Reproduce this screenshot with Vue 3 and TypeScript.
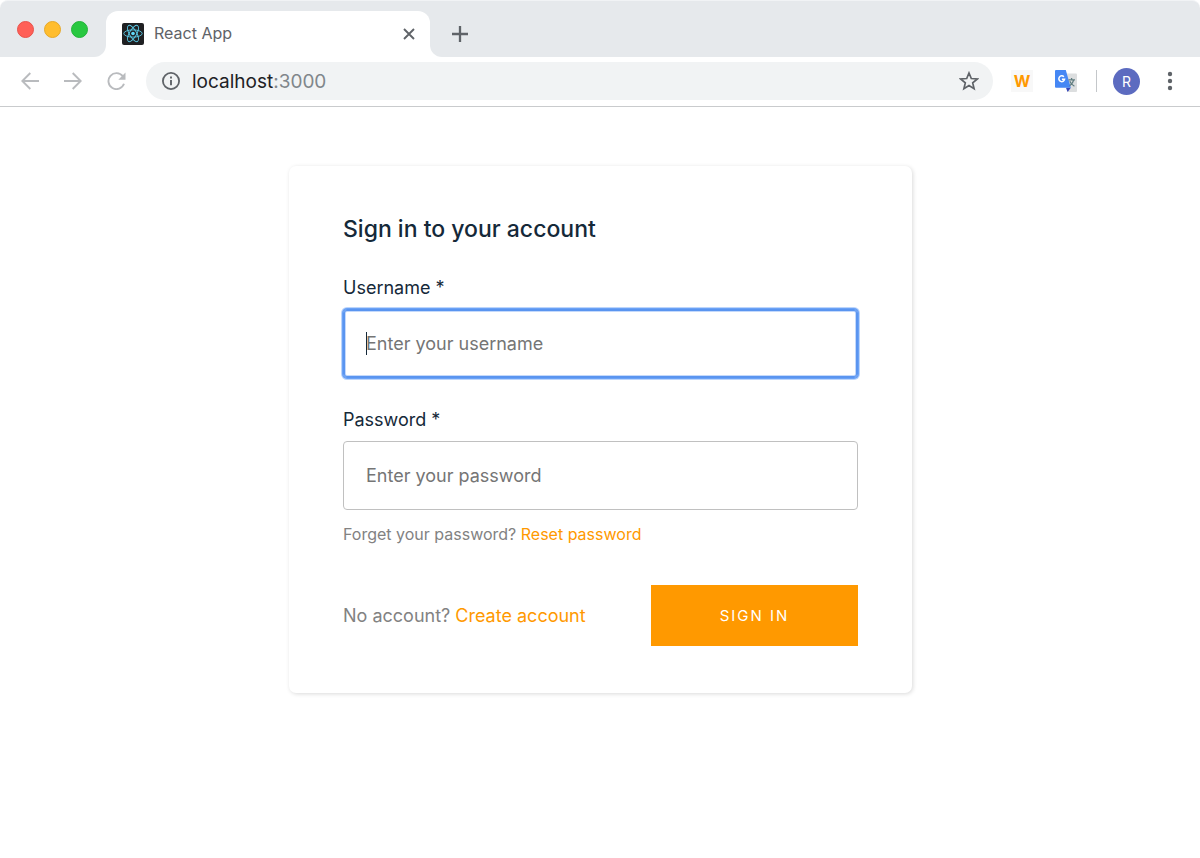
<script setup lang="ts">
import { ref } from 'vue'

const username = ref('')
const password = ref('')
const address = { host: 'localhost', port: ':3000' }
const lights = ['close', 'minimise', 'zoom']
</script>

<template>
  <div class="window">
    <header>
      <div class="tab-strip">
        <div class="lights">
          <button v-for="l in lights" :key="l" type="button" class="light" :class="l" :aria-label="l"></button>
        </div>
        <div class="tab-back">
          <div class="tab">
            <svg class="favicon" width="22" height="22" viewBox="0 0 22 22" aria-hidden="true">
              <rect width="22" height="22" rx="2" fill="#1f2022" />
              <g fill="none" stroke="#5ccbe8" stroke-width="0.9">
                <ellipse cx="11" cy="10.500" rx="9.2" ry="3.6" />
                <ellipse cx="11" cy="10.500" rx="9.2" ry="3.6" transform="rotate(60 11 10.500)" />
                <ellipse cx="11" cy="10.500" rx="9.2" ry="3.6" transform="rotate(120 11 10.500)" />
              </g>
              <circle cx="11" cy="10.500" r="1.8" fill="#61dafb" />
            </svg>
            <span class="tab-title">React App</span>
            <button type="button" class="icon-button small" aria-label="Close tab">
              <svg width="12" height="12" viewBox="0 0 12 12"><path d="M1 1l10 10M11 1L1 11" stroke="#5f6368" stroke-width="1.9" /></svg>
            </button>
          </div>
        </div>
        <div class="strip-rest">
          <button type="button" class="icon-button" aria-label="New tab">
            <svg width="16" height="16" viewBox="0 0 16 16"><path d="M8 0v16M0 8h16" stroke="#5f6368" stroke-width="2.3" /></svg>
          </button>
        </div>
      </div>

      <div class="toolbar">
        <nav class="history">
          <button type="button" class="icon-button" aria-label="Back">
            <svg width="18" height="18" viewBox="0 0 18 18"><path d="M18 9H1.5M9.3 1L1.3 9l8 8" fill="none" stroke="#b9bbbe" stroke-width="1.9" /></svg>
          </button>
          <button type="button" class="icon-button" aria-label="Forward">
            <svg width="18" height="18" viewBox="0 0 18 18"><path d="M0 9h16.500M8.700 1l8 8-8 8" fill="none" stroke="#b9bbbe" stroke-width="1.9" /></svg>
          </button>
          <button type="button" class="icon-button" aria-label="Reload">
            <svg width="20" height="18" viewBox="0 0 20 18">
              <path d="M15.800 4.200A8 8 0 1 0 17 11.800" fill="none" stroke="#b9bbbe" stroke-width="1.9" />
              <path d="M18.500 .5v7.200h-7.200z" fill="#b9bbbe" />
            </svg>
          </button>
        </nav>
        <div class="address">
          <svg width="18" height="18" viewBox="0 0 18 18" aria-hidden="true">
            <circle cx="9" cy="9" r="8.100" fill="none" stroke="#5f6368" stroke-width="1.800" />
            <path d="M9 8v5.200M9 4.600v2" stroke="#5f6368" stroke-width="1.900" />
          </svg>
          <span class="url">{{ address.host }}<span class="port">{{ address.port }}</span></span>
          <button type="button" class="icon-button" aria-label="Bookmark this page">
            <svg width="20" height="20" viewBox="0 0 20 20">
              <path d="M10 2l2.300 5.500 6 .5-4.600 3.900 1.400 5.800L10 14.600l-5.100 3.100 1.400-5.800L1.700 8l6-.5z" fill="none" stroke="#5f6368" stroke-width="1.700" />
            </svg>
          </button>
        </div>
        <div class="extensions">
          <button type="button" class="ext-w" aria-label="W extension">W</button>
          <button type="button" class="icon-button" aria-label="Translate">
            <svg width="22" height="22" viewBox="0 0 22 22">
              <path d="M8 3.600h13a1 1 0 0 1 1 1V21a1 1 0 0 1-1 1h-8z" fill="#dcdedf" />
              <path d="M11 17.800h4.800L12.600 22z" fill="#3444b8" />
              <path d="M1 0h9.800l5 17.800H1a1 1 0 0 1-1-1V1a1 1 0 0 1 1-1z" fill="#4587f4" />
              <path d="M8.900 6.800A2.900 2.900 0 1 0 9.600 9.200H6.900" fill="none" stroke="#fff" stroke-width="1.500" />
              <path d="M13.500 9.800H20M16.600 8v1.800M18.700 9.800c-.5 2.500-2 4.500-4 6M14.800 11.300c.8 2 2.500 3.700 4.600 4.900" fill="none" stroke="#607d80" stroke-width="1.300" />
            </svg>
          </button>
          <span class="divider"></span>
          <button type="button" class="avatar" aria-label="Profile R">R</button>
          <button type="button" class="icon-button menu" aria-label="Menu">
            <svg width="6" height="20" viewBox="0 0 6 20" fill="#5f6368"><circle cx="3" cy="3" r="2.200" /><circle cx="3" cy="10" r="2.200" /><circle cx="3" cy="17" r="2.200" /></svg>
          </button>
        </div>
      </div>
    </header>

    <main>
      <form class="card" @submit.prevent>
        <h1>Sign in to your account</h1>
        <div class="field">
          <label for="username">Username *</label>
          <div class="control">
            <input id="username" v-model="username" class="active" type="text" placeholder="Enter your username" />
            <span v-if="!username" class="caret"></span>
          </div>
        </div>
        <div class="field">
          <label for="password">Password *</label>
          <div class="control">
            <input id="password" v-model="password" type="password" placeholder="Enter your password" />
          </div>
          <p class="hint">Forget your password? <a href="#reset">Reset password</a></p>
        </div>
        <div class="actions">
          <span>No account? <a href="#create">Create account</a></span>
          <button type="submit" class="submit">SIGN IN</button>
        </div>
      </form>
    </main>
  </div>
</template>

<style>
body {
  margin: 0;
  background: #fff;
}
</style>

<style scoped>
* {
  box-sizing: border-box;
}
.window {
  font-family: Inter, "Liberation Sans", sans-serif;
  min-height: 100vh;
  background: #fff;
}
button {
  font-family: inherit;
  border: 0;
  padding: 0;
  background: none;
  cursor: pointer;
}
svg {
  display: block;
  flex: none;
}
.tab-strip {
  display: flex;
  height: 57px;
}
.lights,
.strip-rest {
  display: flex;
  align-items: center;
  background: #e6e9ec;
  border-top: 1px solid #f1f3f5;
}
.lights {
  width: 106px;
  padding: 0 0 0 17px;
  gap: 10px;
  border-radius: 8px 0 12px 0;
}
.light {
  width: 17px;
  height: 17px;
  border-radius: 50%;
}
.close {
  background: #ff5f57;
  border: 1px solid #e8524b;
}
.minimise {
  background: #ffbd2e;
  border: 1px solid #e6a827;
}
.zoom {
  background: #28c840;
  border: 1px solid #24b33a;
}
.tab-back {
  flex: 0 1 324px;
  padding-top: 10px;
  background: linear-gradient(#e6e9ec 50%, #fff 50%);
  border-top: 1px solid #f1f3f5;
}
.tab {
  display: flex;
  align-items: center;
  height: 46px;
  padding: 0 15px 0 16px;
  background: #fff;
  border-radius: 12px 12px 0 0;
}
.tab-title {
  flex: 1;
  margin-left: 10px;
  padding-bottom: 2px;
  font-size: 16px;
  line-height: 20px;
  color: #5f6368;
}
.strip-rest {
  flex: 1;
  padding: 9px 0 0 22px;
  border-radius: 0 8px 0 12px;
}
.toolbar {
  display: flex;
  align-items: center;
  height: 50px;
  padding: 0 27px 1px 21px;
  border-bottom: 1px solid #c9cbcd;
}
.history {
  display: flex;
  align-items: center;
  gap: 25px;
  width: 125px;
}
.address {
  display: flex;
  align-items: center;
  flex: 1;
  height: 38px;
  padding: 0 14px 0 16px;
  border-radius: 19px;
  background: #f1f3f4;
}
.url {
  flex: 1;
  margin-left: 12px;
  padding-top: 2px;
  font-size: 19px;
  line-height: 24px;
  color: #202124;
}
.port {
  color: #80868b;
}
.extensions {
  display: flex;
  align-items: center;
  margin-left: 18px;
}
.ext-w {
  width: 22px;
  height: 22px;
  margin-right: 22px;
  background: #f8f8f8;
  color: #ff9900;
  font-size: 16px;
  line-height: 22px;
  font-weight: 700;
}
.divider {
  width: 1px;
  height: 22px;
  margin: 0 16px 0 19px;
  background: #c4c7ca;
}
.avatar {
  width: 27px;
  height: 27px;
  margin-right: 27px;
  border-radius: 50%;
  background: #5c6bc0;
  color: #fff;
  font-size: 14px;
  line-height: 27px;
}
main {
  padding: 59px 24px 24px 25px;
}
.card {
  max-width: 623px;
  margin: 0 auto;
  padding: 48px 54px 47px;
  border-radius: 7px;
  background: #fff;
  box-shadow: 1px 1px 4px rgba(0, 0, 0, 0.15);
}
h1 {
  margin: 0 0 32px;
  font-size: 23px;
  line-height: 30px;
  font-weight: 500;
  color: #152939;
}
.field {
  margin-bottom: 30px;
}
label {
  display: block;
  margin-bottom: 9px;
  font-size: 18px;
  line-height: 24px;
  color: #152939;
}
.control {
  position: relative;
}
input {
  display: block;
  width: 100%;
  height: 69px;
  padding: 0 22px;
  border: 1px solid #c0c0c0;
  border-radius: 4px;
  background: #fff;
  font-family: inherit;
  font-size: 18px;
  color: #152939;
  outline: none;
}
input::placeholder {
  color: #757575;
  opacity: 1;
}
.active {
  border-color: #5a95f0;
  box-shadow: 0 0 0 1px #6ba2f6, 0 0 0 2px #bcd5fb, inset 0 0 0 1px #5a95f0, inset 0 0 0 2px #c4d9fb;
}
.caret {
  position: absolute;
  left: 23px;
  top: 23px;
  width: 1px;
  height: 23px;
  background: #152939;
}
.hint {
  margin: 14px 0 0;
  font-size: 16px;
  line-height: 20px;
  color: #828282;
}
a {
  color: #ff9900;
  text-decoration: none;
}
.actions {
  display: flex;
  align-items: center;
  justify-content: space-between;
  margin-top: 41px;
  font-size: 18px;
  line-height: 24px;
  color: #828282;
}
.submit {
  width: 207px;
  height: 61px;
  background: #ff9900;
  color: #fff;
  font-size: 15px;
  letter-spacing: 2px;
}
</style>
